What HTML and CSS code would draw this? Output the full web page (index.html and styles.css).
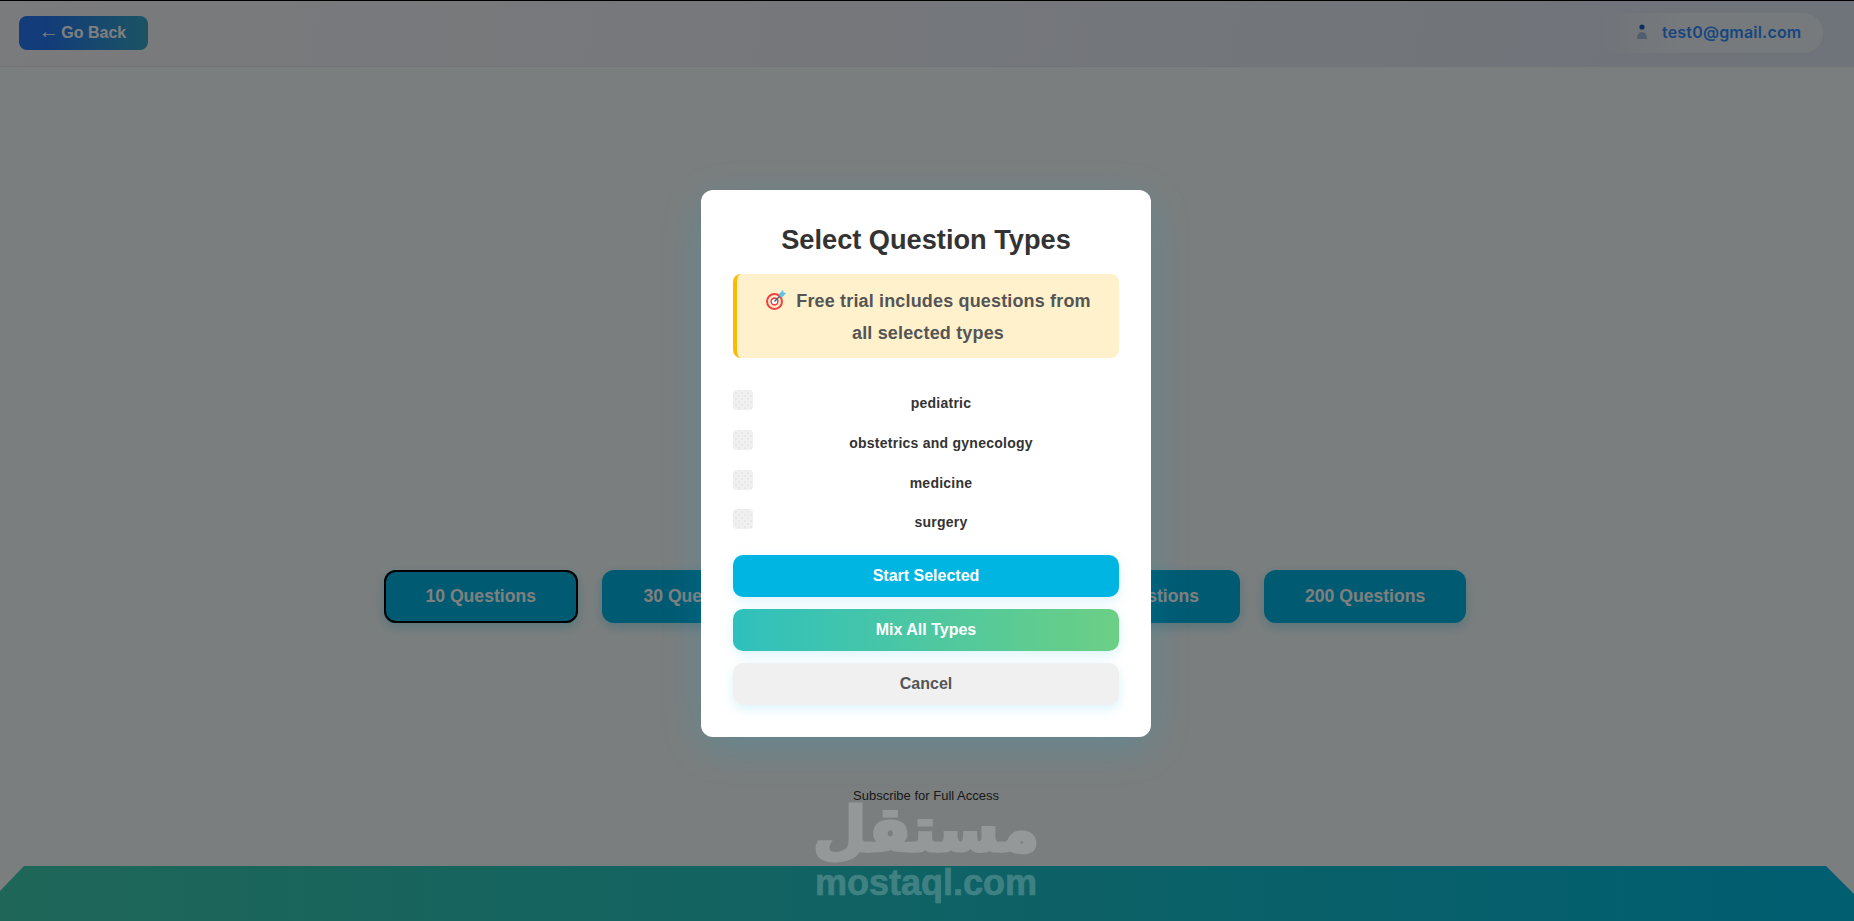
FILE: index.html
```html
<!DOCTYPE html>
<html lang="en">
<head>
    <meta charset="UTF-8">
    <meta name="viewport" content="width=device-width, initial-scale=1.0">
    <title>Select Question Types</title>
    <link rel="stylesheet" href="styles.css">
</head>
<body>
    <div class="page">
        <header class="topbar">
            <button class="back-btn"><span class="back-arrow">←</span> Go Back</button>
            <div class="user-pill">
                <svg class="user-icon" width="12" height="16" viewBox="0 0 12 16">
                    <circle cx="6" cy="3" r="2.6" fill="#1c5fb0"/>
                    <path d="M1 15c0-4 2-7 5-7s5 3 5 7z" fill="#1c5fb0" fill-opacity="0.35"/>
                </svg>
                <span class="user-email">test0@gmail.com</span>
            </div>
        </header>

        <main class="main">
            <div class="count-row">
                <button class="count-btn active">10 Questions</button>
                <button class="count-btn">30 Questions</button>
                <button class="count-btn">50 Questions</button>
                <button class="count-btn">100 Questions</button>
                <button class="count-btn">200 Questions</button>
            </div>
            <p class="subscribe">Subscribe for Full Access</p>
        </main>

        <footer class="footer"></footer>
    </div>

    <div class="overlay">
        <div class="modal">
            <h2 class="modal-title">Select Question Types</h2>
            <div class="notice">
                <svg class="notice-icon" width="22" height="22" viewBox="0 0 22 22">
                    <circle cx="9.5" cy="12.5" r="7.5" fill="none" stroke="#f1423f" stroke-width="2"/>
                    <circle cx="9.5" cy="12.5" r="4.6" fill="#fff"/>
                    <circle cx="9.5" cy="12.5" r="3.4" fill="none" stroke="#f1423f" stroke-width="1.6"/>
                    <path d="M9.5 12.5L17 5" stroke="#3d6b80" stroke-width="1.4"/>
                    <path d="M14 5l4-4 .6 2.6L21.4 4l-4 4-2.8-.4z" fill="#5cc4ea"/>
                </svg>Free trial includes questions from all selected types
            </div>

            <div class="type-list">
                <label class="type-row"><input class="type-check" type="checkbox"><span class="type-name">pediatric</span></label>
                <label class="type-row"><input class="type-check" type="checkbox"><span class="type-name">obstetrics and gynecology</span></label>
                <label class="type-row"><input class="type-check" type="checkbox"><span class="type-name">medicine</span></label>
                <label class="type-row"><input class="type-check" type="checkbox"><span class="type-name">surgery</span></label>
            </div>

            <div class="modal-actions">
                <button class="action-btn start">Start Selected</button>
                <button class="action-btn mix">Mix All Types</button>
                <button class="action-btn cancel">Cancel</button>
            </div>
        </div>
    </div>

    <div class="watermark">
        <span class="wm-arabic" lang="ar" dir="rtl">مستقل</span>
        <span class="wm-latin">mostaql.com</span>
    </div>
</body>
</html>
```

FILE: styles.css
```css
* { box-sizing: border-box; }
html, body { margin: 0; height: 100%; overflow: hidden; }
body { font-family: "Liberation Sans", Arial, sans-serif; background: #f6fdfd; position: relative; }
button { font-family: inherit; border: none; cursor: pointer; }

.page { height: 921px; display: flex; flex-direction: column; }

.topbar { height: 67px; flex-shrink: 0; display: flex; align-items: center; justify-content: space-between; padding: 0 31px 0 19px; background: linear-gradient(100deg, #f5f6f9, #dee7f4); border-top: 1px solid #000; border-bottom: 1px solid #e2e6ee; }
.back-btn { width: 129px; height: 34px; margin-top: -1px; padding: 0 2px 0 0; border-radius: 8px; color: #fff; font-size: 16px; font-weight: 700; background: linear-gradient(90deg, #2478f4 20%, #38a8c8); }
.back-arrow { margin-right: -2px; font-size: 20px; font-weight: 400; line-height: 0; }
.user-pill { width: 223px; height: 40px; display: flex; align-items: center; padding: 0 0 2px 36px; gap: 14px; border-radius: 20px; background: linear-gradient(90deg, transparent, #eef5f8 40%); margin-top: -1px; }
.user-email { font-family: Inter, sans-serif; font-size: 16px; font-weight: 600; letter-spacing: 0.2px; color: #2f8dff; }

.main { flex: 1; display: flex; flex-direction: column; align-items: center; padding: 503px 4px 0 0; }
.count-row { display: flex; gap: 24px; }
.count-btn { height: 53px; padding: 0 41px; min-width: 194px; border-radius: 12px; background: #00b5e2; color: #fff; font-size: 17.6px; font-weight: 700; box-shadow: 0 4px 12px rgba(0, 181, 226, 0.3); }
.count-btn.active { outline: 2px solid #000; outline-offset: -2px; }
.subscribe { margin: 165px 0 0 2px; font-size: 13px; color: #333; }

.footer { height: 55px; flex-shrink: 0; background: linear-gradient(90deg, #3ecdb0, #00bce2); clip-path: polygon(24px 0, 1826px 0, 100% 28px, 100% 100%, 0 100%, 0 25px); }

.overlay { position: absolute; inset: 0; background: rgba(0, 0, 0, 0.5); display: flex; align-items: center; justify-content: center; padding: 6px 2px 0 0; }
.modal { width: 450px; height: 547px; padding: 32px; background: #fff; border-radius: 12px; box-shadow: 0 10px 40px rgba(0, 181, 226, 0.2); }
.modal-title { margin: 0 0 20px; padding-top: 4px; font-size: 27.2px; line-height: 28px; font-weight: 700; color: #333; text-align: center; }

.notice { height: 84px; padding: 11px 22px 9px; background: #fff1cc; border-left: 4px solid #ffb900; border-radius: 8px; color: #555; font-size: 18px; font-weight: 700; letter-spacing: 0.16px; line-height: 32px; text-align: center; }
.notice-icon { vertical-align: -4px; margin-right: 9px; }

.type-list { margin-top: 32px; display: flex; flex-direction: column; gap: 19.8px; }
.type-row { display: flex; align-items: flex-start; height: 20px; }
.type-check { appearance: none; width: 20px; height: 20px; margin: 0 10px 0 0; flex-shrink: 0; border-radius: 4px; background: radial-gradient(circle, #dedede 0.5px, transparent 0.9px) 0 0 / 6px 6px, radial-gradient(circle, #dedede 0.5px, transparent 0.9px) 3px 3px / 6px 6px, #f0f0f0; }
.type-name { flex: 1; padding-top: 6px; line-height: 14px; font-size: 14px; font-weight: 700; letter-spacing: 0.25px; color: #333; text-align: center; }

.modal-actions { margin-top: 26px; display: flex; flex-direction: column; gap: 12px; }
.action-btn { height: 42px; border-radius: 10px; font-size: 16px; font-weight: 700; box-shadow: 0 4px 12px rgba(0, 181, 226, 0.15); }
.action-btn.start { background: #00b5e2; color: #fff; }
.action-btn.mix { background: linear-gradient(90deg, #2fc0bd, #6ccf85); color: #fff; }
.action-btn.cancel { background: #f0f0f0; color: #555; }

.watermark { position: absolute; left: 815px; top: 795px; width: 222px; display: flex; flex-direction: column; align-items: center; color: #fff; opacity: 0.2; font-weight: 700; pointer-events: none; }
.wm-arabic { font-family: "DejaVu Sans", sans-serif; font-size: 62px; line-height: 70px; -webkit-text-stroke: 3px #fff; }
.wm-latin { font-size: 36px; line-height: 36px; -webkit-text-stroke: 0.6px #fff; }
```
